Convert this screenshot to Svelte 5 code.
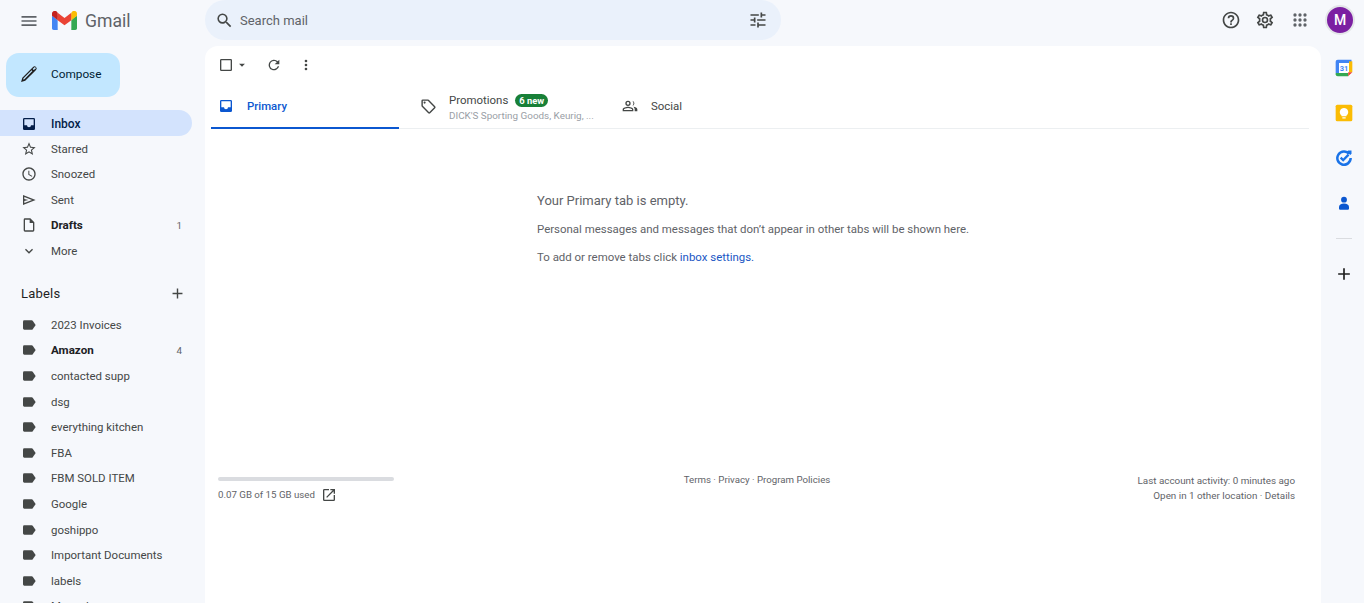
<script>
  // Gmail inbox with an empty Primary tab
  const mainNav = [
    { name: 'Inbox', icon: 'inbox', active: true },
    { name: 'Starred', icon: 'star' },
    { name: 'Snoozed', icon: 'clock' },
    { name: 'Sent', icon: 'send' },
    { name: 'Drafts', icon: 'draft', bold: true, count: 1 },
    { name: 'More', icon: 'chevron' }
  ]
  const labels = [
    { name: '2023 Invoices' },
    { name: 'Amazon', bold: true, count: 4 },
    { name: 'contacted supp' },
    { name: 'dsg' },
    { name: 'everything kitchen' },
    { name: 'FBA' },
    { name: 'FBM SOLD ITEM' },
    { name: 'Google' },
    { name: 'goshippo' },
    { name: 'Important Documents' },
    { name: 'labels' },
    { name: 'Manuals' }
  ]
  const paths = {
    inbox: 'M19 3H5a2 2 0 0 0-2 2v14a2 2 0 0 0 2 2h14a2 2 0 0 0 2-2V5a2 2 0 0 0-2-2zm0 11h-4a3 3 0 0 1-6 0H5V5h14z',
    star: 'M22 9.24l-7.19-.62L12 2 9.19 8.63 2 9.24l5.46 4.73L5.82 21 12 17.27 18.18 21l-1.63-7.03L22 9.24zM12 15.4l-3.76 2.27 1-4.28-3.32-2.88 4.38-.38L12 6.1l1.71 4.04 4.38.38-3.32 2.88 1 4.28L12 15.4z',
    clock: 'M11.99 2C6.47 2 2 6.48 2 12s4.47 10 9.99 10C17.52 22 22 17.52 22 12S17.52 2 11.99 2zM12 20c-4.42 0-8-3.58-8-8s3.58-8 8-8 8 3.58 8 8-3.58 8-8 8zm.5-13H11v6l5.25 3.15.75-1.23-4.5-2.67z',
    send: 'M3 4.5v15L22 12 3 4.5zm2 3l11.5 4.5L5 16.5v-3l6-1.5-6-1.5v-3z',
    draft: 'M14 2H6a2 2 0 0 0-2 2v16a2 2 0 0 0 2 2h12a2 2 0 0 0 2-2V8l-6-6zm4 18H6V4h7v5h5v11z',
    chevron: 'M7.41 8.59L12 13.17l4.59-4.58L18 10l-6 6-6-6z'
  }
</script>

<div class="gmail">
  <aside class="sidebar">
    <div class="brand">
      <svg class="menu" viewBox="0 0 24 24" width="20" height="20"><path fill="#5f6368" d="M3 18h18v-2H3v2zm0-5h18v-2H3v2zm0-7v2h18V6H3z" /></svg>
      <svg class="logo" viewBox="0 0 256 193" width="25" height="19">
        <path fill="#4285f4" d="M58 193V93L27 65 0 49v126c0 10 8 18 18 18z" />
        <path fill="#34a853" d="M198 193h40c10 0 18-8 18-18V49l-29 17-29 27z" />
        <path fill="#ea4335" d="M58 93l-4-38 4-37 70 52 70-52 5 33-5 42-70 53z" />
        <path fill="#fbbc04" d="M198 18v75l58-44V26c0-24-27-37-46-23z" />
        <path fill="#c5221f" d="M0 49l27 20 31 24V18L46 3C27-11 0 2 0 26z" />
      </svg>
      <span class="wordmark">Gmail</span>
    </div>

    <button class="compose">
      <svg viewBox="0 0 24 24" width="20" height="20"><path fill="#1f1f1f" d="M20.41 3.59a2.5 2.5 0 0 0-3.54 0L4 16.5 2.5 21.5l5-1.5L20.41 7.13a2.5 2.5 0 0 0 0-3.54zM6.5 18.2l-1.6.5.5-1.6L15 7.4l1.1 1.1zM17.5 7.1L16.4 6l1.9-1.9a1 1 0 0 1 1.5 1.5z" /></svg>
      <span>Compose</span>
    </button>

    <nav class="nav main-nav">
      {#each mainNav as item (item.name)}
        <div class="row" class:active={item.active} class:bold={item.bold}>
          <svg viewBox="0 0 24 24" width="16" height="16">
            <path fill={item.active ? '#041e49' : '#444746'} d={item.active ? 'M3 5a2 2 0 0 1 2-2h14a2 2 0 0 1 2 2v14a2 2 0 0 1-2 2H5a2 2 0 0 1-2-2zm2 9h4a3 3 0 0 0 6 0h4V5H5z' : paths[item.icon]} />
          </svg>
          <span class="name">{item.name}</span>
          {#if item.count}<span class="count">{item.count}</span>{/if}
        </div>
      {/each}
    </nav>

    <div class="labels-head">
      <span>Labels</span>
      <svg viewBox="0 0 24 24" width="17" height="17"><path fill="#444746" d="M19 13h-6v6h-2v-6H5v-2h6V5h2v6h6z" /></svg>
    </div>

    <div class="nav">
      {#each labels as label (label.name)}
        <div class="row" class:bold={label.bold}>
          <svg viewBox="0 0 24 24" width="16" height="16"><path fill="#444746" d="M17.6 5.8A2 2 0 0 0 16 5H5a2 2 0 0 0-2 2v10c0 1.1.9 2 2 2h11a2 2 0 0 0 1.6-.8L22 12z" /></svg>
          <span class="name">{label.name}</span>
          {#if label.count}<span class="count">{label.count}</span>{/if}
        </div>
      {/each}
    </div>
  </aside>

  <header class="topbar">
    <div class="search">
      <svg viewBox="0 0 24 24" width="19" height="19"><path fill="#444746" d="M15.5 14h-.79l-.28-.27A6.47 6.47 0 0 0 16 9.5 6.5 6.5 0 1 0 9.5 16c1.61 0 3.09-.59 4.23-1.57l.27.28v.79l5 4.99L20.49 19l-4.99-5zm-6 0C7.01 14 5 11.99 5 9.5S7.01 5 9.5 5 14 7.01 14 9.5 11.99 14 9.5 14z" /></svg>
      <span class="placeholder">Search mail</span>
      <svg class="tune" viewBox="0 0 24 24" width="20" height="20"><path fill="#444746" d="M3 17v2h6v-2H3zM3 5v2h10V5H3zm10 16v-2h8v-2h-8v-2h-2v6h2zM7 9v2H3v2h4v2h2V9H7zm14 4v-2H11v2h10zm-6-4h2V7h4V5h-4V3h-2v6z" /></svg>
    </div>
    <div class="actions">
      <svg viewBox="0 0 24 24" width="20" height="20"><path fill="#444746" d="M11 18h2v-2h-2v2zm1-16C6.48 2 2 6.48 2 12s4.48 10 10 10 10-4.48 10-10S17.52 2 12 2zm0 18c-4.41 0-8-3.59-8-8s3.59-8 8-8 8 3.59 8 8-3.59 8-8 8zm0-14a4 4 0 0 0-4 4h2c0-1.1.9-2 2-2s2 .9 2 2c0 2-3 1.75-3 5h2c0-2.25 3-2.5 3-5a4 4 0 0 0-4-4z" /></svg>
      <svg viewBox="0 0 24 24" width="20" height="20"><path fill="#444746" d="M19.43 12.98c.04-.32.07-.64.07-.98s-.03-.66-.07-.98l2.11-1.65c.19-.15.24-.42.12-.64l-2-3.46c-.12-.22-.39-.3-.61-.22l-2.49 1c-.52-.4-1.08-.73-1.69-.98l-.38-2.65A.49.49 0 0 0 14 2h-4c-.25 0-.46.18-.49.42l-.38 2.65c-.61.25-1.17.59-1.69.98l-2.49-1a.49.49 0 0 0-.61.22l-2 3.46c-.13.22-.07.49.12.64l2.11 1.65c-.04.32-.07.65-.07.98s.03.66.07.98l-2.11 1.65c-.19.15-.24.42-.12.64l2 3.46c.12.22.39.3.61.22l2.49-1c.52.4 1.08.73 1.69.98l.38 2.65c.03.24.24.42.49.42h4c.25 0 .46-.18.49-.42l.38-2.65c.61-.25 1.17-.59 1.69-.98l2.49 1c.23.09.49 0 .61-.22l2-3.46c.12-.22.07-.49-.12-.64l-2.11-1.65zM17.45 11.27c.04.31.05.52.05.73s-.02.43-.05.73l-.14 1.13.89.7 1.08.84-.7 1.21-1.27-.51-1.04-.42-.9.68c-.43.32-.84.56-1.25.73l-1.06.43-.16 1.13-.2 1.35h-1.4l-.19-1.35-.16-1.13-1.06-.43c-.43-.18-.83-.41-1.23-.71l-.91-.7-1.06.43-1.27.51-.7-1.21 1.08-.84.89-.7-.14-1.13c-.03-.31-.05-.54-.05-.74s.02-.43.05-.73l.14-1.13-.89-.7-1.08-.84.7-1.21 1.27.51 1.04.42.9-.68c.43-.32.84-.56 1.25-.73l1.06-.43.16-1.13.2-1.35h1.39l.19 1.35.16 1.13 1.06.43c.43.18.83.41 1.23.71l.91.7 1.06-.43 1.27-.51.7 1.21-1.07.85-.89.7.14 1.13zM12 8a4 4 0 1 0 0 8 4 4 0 0 0 0-8zm0 6a2 2 0 1 1 0-4 2 2 0 0 1 0 4z" /></svg>
      <svg viewBox="0 0 24 24" width="20" height="20"><path fill="#5f6368" d="M6 8a2 2 0 1 0 0-4 2 2 0 0 0 0 4zm6 0a2 2 0 1 0 0-4 2 2 0 0 0 0 4zm6 0a2 2 0 1 0 0-4 2 2 0 0 0 0 4zM6 14a2 2 0 1 0 0-4 2 2 0 0 0 0 4zm6 0a2 2 0 1 0 0-4 2 2 0 0 0 0 4zm6 0a2 2 0 1 0 0-4 2 2 0 0 0 0 4zM6 20a2 2 0 1 0 0-4 2 2 0 0 0 0 4zm6 0a2 2 0 1 0 0-4 2 2 0 0 0 0 4zm6 0a2 2 0 1 0 0-4 2 2 0 0 0 0 4z" /></svg>
      <div class="avatar">M</div>
    </div>
  </header>

  <main class="panel">
    <div class="toolbar">
      <svg viewBox="0 0 24 24" width="16" height="16"><path fill="#444746" d="M19 3H5a2 2 0 0 0-2 2v14a2 2 0 0 0 2 2h14a2 2 0 0 0 2-2V5a2 2 0 0 0-2-2zm0 16H5V5h14z" /></svg>
      <svg class="caret" viewBox="0 0 24 24" width="14" height="14"><path fill="#444746" d="M7 10l5 5 5-5z" /></svg>
      <svg class="refresh" viewBox="0 0 24 24" width="16" height="16"><path fill="#444746" d="M17.65 6.35A8 8 0 1 0 19.73 14h-2.08A6 6 0 1 1 12 6c1.66 0 3.14.69 4.22 1.78L13 11h7V4z" /></svg>
      <svg class="dots" viewBox="0 0 24 24" width="16" height="16"><path fill="#444746" d="M12 8a2 2 0 1 0 0-4 2 2 0 0 0 0 4zm0 2a2 2 0 1 0 0 4 2 2 0 0 0 0-4zm0 6a2 2 0 1 0 0 4 2 2 0 0 0 0-4z" /></svg>
    </div>

    <div class="tabs">
      <div class="tab primary">
        <svg viewBox="0 0 24 24" width="16" height="16"><path fill="#0b57d0" d="M3 5a2 2 0 0 1 2-2h14a2 2 0 0 1 2 2v14a2 2 0 0 1-2 2H5a2 2 0 0 1-2-2zm2 9h4a3 3 0 0 0 6 0h4V5H5z" /></svg>
        <span>Primary</span>
      </div>
      <div class="tab promotions">
        <svg viewBox="0 0 24 24" width="17" height="17"><path fill="#444746" d="M21.41 11.58l-9-9A2 2 0 0 0 11 2H4a2 2 0 0 0-2 2v7c0 .55.22 1.05.59 1.42l9 9a2 2 0 0 0 2.82 0l7-7a2 2 0 0 0 0-2.84zM13 20l-9-9V4h7l9 9zM6.5 5A1.5 1.5 0 1 0 6.5 8 1.5 1.5 0 0 0 6.5 5z" /></svg>
        <div class="promo-text">
          <div class="promo-top"><span>Promotions</span><span class="badge">6 new</span></div>
          <div class="promo-sub">DICK'S Sporting Goods, Keurig, ...</div>
        </div>
      </div>
      <div class="tab social">
        <svg viewBox="0 0 24 24" width="16" height="16"><path fill="#444746" d="M9 12a4 4 0 1 0 0-8 4 4 0 0 0 0 8zm0-6a2 2 0 1 1 0 4 2 2 0 0 1 0-4zm0 7c-2.67 0-8 1.34-8 4v3h16v-3c0-2.66-5.33-4-8-4zm6 5H3v-1c.2-.7 3.3-2 6-2s5.8 1.300 6 2zM15.5 4.100a4 4 0 0 1 0 7.800 6 6 0 0 0 0-7.800zM17 13.100c2.900.4 6 1.700 6 3.900v3h-4v-3c0-1.600-.8-2.900-2-3.900z" /></svg>
        <span>Social</span>
      </div>
    </div>

    <div class="empty">
      <p class="empty-title">Your Primary tab is empty.</p>
      <p>Personal messages and messages that don’t appear in other tabs will be shown here.</p>
      <p>To add or remove tabs click <span class="link">inbox settings.</span></p>
    </div>

    <footer class="foot">
      <div class="storage">
        <div class="bar"></div>
        <div class="used">
          <span>0.07 GB of 15 GB used</span>
          <svg viewBox="0 0 24 24" width="16" height="16"><path fill="#444746" d="M19 19H5V5h7V3H5a2 2 0 0 0-2 2v14a2 2 0 0 0 2 2h14a2 2 0 0 0 2-2v-7h-2zM14 3v2h3.590l-9.830 9.830 1.410 1.410L19 6.410V10h2V3z" /></svg>
        </div>
      </div>
      <div class="terms">Terms · Privacy · Program Policies</div>
      <div class="activity">
        <div>Last account activity: 0 minutes ago</div>
        <div>Open in 1 other location · Details</div>
      </div>
    </footer>
  </main>

  <aside class="addons">
    <svg viewBox="0 0 24 24" width="20" height="20">
      <rect x="3" y="3" width="18" height="18" rx="1.500" fill="#fff" />
      <path fill="#4285f4" d="M4.500 2H21v4H6v12H2V4.500A2.500 2.500 0 0 1 4.500 2z" />
      <path fill="#fbbc04" d="M18 4h4v13h-4z" />
      <path fill="#34a853" d="M2 18h15v4H4.500A2.500 2.500 0 0 1 2 19.500z" />
      <path fill="#ea4335" d="M17 17h5l-5 5z" />
      <text x="12" y="15.500" text-anchor="middle" font-size="9" font-weight="700" fill="#4285f4" font-family="Roboto, sans-serif">31</text>
    </svg>
    <svg viewBox="0 0 24 24" width="20" height="20">
      <rect x="2" y="2" width="20" height="20" rx="2" fill="#fbbc04" />
      <path fill="#fff" d="M12 6a5 5 0 0 0-3 9v1h6v-1a5 5 0 0 0-3-9zM10 17h4v1.500h-4z" />
    </svg>
    <svg viewBox="0 0 24 24" width="20" height="20">
      <path fill="#1a73e8" d="M19.500 6.300A9.500 9.500 0 1 0 21.500 12h-3a6.500 6.500 0 1 1-1.600-4.200z" />
      <path fill="#1a73e8" d="M17 3h4v4l-1.500 1.500-4-4z" />
      <path fill="#1a73e8" d="M11 16.500l-4-4 2-2 2 2 5.500-5.500 2 2z" />
    </svg>
    <svg viewBox="0 0 24 24" width="20" height="20">
      <circle cx="12" cy="8" r="3.500" fill="#0b57d0" />
      <path fill="#0b57d0" d="M12 12.500c-3.500 0-6 1.700-6 4V19a1 1 0 0 0 1 1h10a1 1 0 0 0 1-1v-2.500c0-2.300-2.500-4-6-4z" />
    </svg>
    <div class="divider"></div>
    <svg viewBox="0 0 24 24" width="20" height="20"><path fill="#1f1f1f" d="M19 13h-6v6h-2v-6H5v-2h6V5h2v6h6z" /></svg>
  </aside>
</div>

<style>
  :global(body) {
    margin: 0;
    background: #f6f8fc;
    overflow: hidden;
  }
  .gmail {
    display: grid;
    grid-template-columns: 205px 1fr 43px;
    grid-template-rows: 46px 1fr;
    grid-template-areas:
      "side top top"
      "side panel rail";
    height: 603px;
    overflow: hidden;
    font-family: Roboto, "Liberation Sans", sans-serif;
    color: #444746;
    font-size: 11.45px;
  }
  .gmail svg {
    display: block;
    flex: none;
  }

  .sidebar {
    grid-area: side;
    height: 603px;
    overflow: hidden;
  }
  .brand {
    display: flex;
    align-items: center;
    height: 41px;
    padding-left: 19px;
  }
  .logo {
    margin-left: 13px;
  }
  .wordmark {
    margin-left: 8px;
    font-size: 17.6px;
    color: #5f6368;
  }
  .compose {
    display: flex;
    align-items: center;
    width: 114px;
    height: 44px;
    margin: 12px 0 13px 6px;
    padding: 0 0 2px 13px;
    border: none;
    border-radius: 13px;
    background: #c2e7ff;
    color: #001d35;
    font: 400 11.8px Roboto, sans-serif;
    gap: 12px;
  }
  .row {
    display: flex;
    align-items: center;
    height: 25.6px;
    width: 192px;
    padding: 1px 10px 0 21px;
    box-sizing: border-box;
    border-radius: 0 13px 13px 0;
    color: #444746;
  }
  .main-nav .row {
    padding-top: 0.6px;
  }
  .main-nav .row.active {
    padding-top: 2px;
  }
  .row .name {
    margin-left: 14px;
  }
  .row.active {
    background: #d3e3fd;
    color: #041e49;
    font-weight: 500;
    font-size: 12px;
  }
  .row.bold {
    color: #202124;
    font-weight: 700;
    font-size: 11.6px;
  }
  .count {
    margin-left: auto;
    font-size: 9.8px;
    font-weight: 400;
    color: #5f6368;
  }
  .labels-head {
    display: flex;
    align-items: center;
    justify-content: space-between;
    height: 24px;
    margin-top: 18px;
    margin-bottom: 6px;
    width: 186px;
    padding-left: 21px;
    box-sizing: border-box;
    font-size: 13px;
    color: #1f1f1f;
    letter-spacing: 0.2px;
  }

  .topbar {
    grid-area: top;
    display: flex;
    align-items: center;
    justify-content: space-between;
    padding: 0 9px 6px 0;
    box-sizing: border-box;
  }
  .search {
    display: flex;
    align-items: center;
    width: 576px;
    height: 40px;
    border-radius: 20px;
    background: #eaf1fb;
    padding: 0 13px 0 10px;
    box-sizing: border-box;
  }
  .placeholder {
    margin-left: 6px;
    font-size: 13px;
    color: #5f6368;
  }
  .tune {
    margin-left: auto;
  }
  .actions {
    display: flex;
    align-items: center;
    gap: 14.5px;
  }
  .avatar {
    display: grid;
    place-items: center;
    width: 26px;
    height: 26px;
    margin-left: 1px;
    border-radius: 50%;
    background: #7b1fa2;
    border: 2px solid #e3e5e8;
    color: #fff;
    font-size: 14px;
    font-weight: 500;
  }
  .panel {
    grid-area: panel;
    display: flex;
    flex-direction: column;
    background: #fff;
    border-radius: 13px 13px 0 0;
    padding: 0 12px 0 6px;
    min-height: 0;
  }
  .toolbar {
    display: flex;
    align-items: center;
    height: 38px;
    padding-left: 7px;
    flex: none;
  }
  .caret {
    margin-left: 1px;
  }
  .refresh {
    margin-left: 17px;
  }
  .dots {
    margin-left: 16px;
  }
  .tabs {
    display: flex;
    height: 45px;
    box-sizing: border-box;
    border-bottom: 1px solid #eceff1;
    flex: none;
  }
  .tab {
    display: flex;
    align-items: center;
    height: 44px;
    box-sizing: border-box;
  }
  .primary {
    width: 188px;
    height: 45px;
    padding-left: 7px;
    padding-top: 1px;
    gap: 13px;
    color: #0b57d0;
    font-weight: 500;
    font-size: 11.4px;
    border-bottom: 2px solid #0b57d0;
  }
  .promotions {
    width: 201px;
    padding-left: 21px;
    gap: 12px;
  }
  .promo-text {
    margin-top: 2px;
  }
  .promo-top {
    display: flex;
    align-items: center;
    gap: 7px;
    line-height: 15px;
    padding-top: 2px;
  }
  .promo-sub {
    font-size: 9.9px;
    color: #9aa0a6;
    line-height: 15px;
  }
  .badge {
    background: #188038;
    color: #fff;
    font-size: 9.4px;
    font-weight: 700;
    line-height: 13px;
    padding: 0 4px;
    border-radius: 7px;
  }
  .social {
    padding-left: 22px;
    gap: 13px;
  }

  .empty {
    margin: 64px 0 0 326px;
    flex: none;
  }
  .empty p {
    margin: 0 0 14px;
    line-height: 14px;
    color: #5f6368;
  }
  .empty .empty-title {
    font-size: 13px;
    margin-bottom: 12.5px;
    line-height: 16px;
  }
  .link {
    color: #1a56c4;
  }
  .foot {
    display: grid;
    grid-template-columns: 1fr auto 1fr;
    margin-top: 195px;
    padding: 0 14px 0 7px;
    font-size: 9.85px;
    color: #5f6368;
  }
  .bar {
    width: 176px;
    height: 4px;
    border-radius: 2px;
    background: #dadce0;
    margin-top: 4px;
  }
  .used {
    display: flex;
    align-items: center;
    gap: 6px;
    margin-top: 6px;
    font-size: 9.7px;
  }
  .terms {
    line-height: 14px;
    margin-left: 1px;
    font-size: 9.7px;
  }
  .activity {
    text-align: right;
    line-height: 15.5px;
  }

  .addons {
    grid-area: rail;
    display: flex;
    flex-direction: column;
    align-items: center;
    padding: 12px 0 0 3px;
    gap: 25px;
  }
  .divider {
    width: 16px;
    height: 1px;
    background: #dadce0;
  }
</style>
